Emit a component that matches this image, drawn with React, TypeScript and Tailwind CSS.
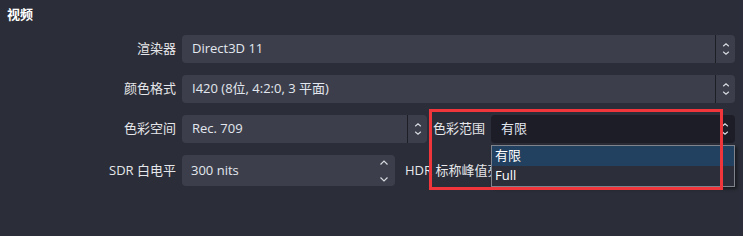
import type { ReactNode } from "react";

const FONT = "font-['Open_Sans','Noto_Sans_CJK_SC',sans-serif]";

function ComboArrows() {
  return (
    <svg width="8" height="12" viewBox="0 0 8 12" fill="none" stroke="#d6d8de" strokeWidth={1.2}>
      <path d="M1.2 3.2 L4 0.8 L6.8 3.2" />
      <path d="M1.2 8.8 L4 11.2 L6.8 8.8" />
    </svg>
  );
}

function SpinArrows() {
  return (
    <svg width="10" height="22" viewBox="0 0 10 22" fill="none" stroke="#d6d8de" strokeWidth={1.2}>
      <path d="M1.5 4.5 L5 1 L8.5 4.5" />
      <path d="M1.5 17.5 L5 21 L8.5 17.5" />
    </svg>
  );
}

function Label({ children, width }: { children: ReactNode; width: string }) {
  return <div className={`${width} shrink-0 text-right text-[13px] text-[#e6e7ea]`}>{children}</div>;
}

function Combo({ value, width, dark }: { value: string; width: string; dark?: boolean }) {
  return (
    <div
      className={`${width} h-[28px] flex shrink-0 rounded-[4px] ${
        dark ? "bg-[#1c1d27]" : "bg-[#3c3f4b]"
      }`}
    >
      <div className="flex-1 flex items-center pl-[10px] text-[13px] text-[#e3e7ef] whitespace-nowrap overflow-hidden">
        {value}
      </div>
      <div
        className={`w-[20px] flex items-center justify-center ${
          dark ? "" : "border-l border-[#1d1e26]"
        }`}
      >
        <ComboArrows />
      </div>
    </div>
  );
}

export default function App() {
  return (
    <div className={`relative w-[743px] h-[236px] overflow-hidden bg-[#2b2d38] ${FONT}`}>
      <div className="h-[35px] pl-[7px] pt-[5px] text-[13px] font-bold leading-[18px] text-white">视频</div>

      <div className="flex flex-col gap-[12px]">
        <div className="flex items-center gap-[6px]">
          <Label width="w-[176px]">渲染器</Label>
          <Combo value="Direct3D 11" width="w-[553px]" />
        </div>

        <div className="flex items-center gap-[6px]">
          <Label width="w-[176px]">颜色格式</Label>
          <Combo value="I420 (8位, 4:2:0, 3 平面)" width="w-[553px]" />
        </div>

        <div className="flex items-center gap-[6px]">
          <Label width="w-[176px]">色彩空间</Label>
          <Combo value="Rec. 709" width="w-[245px]" />
          <div className="w-[52px] shrink-0 whitespace-nowrap text-[13px] text-[#e6e7ea]">色彩范围</div>
          <Combo value="有限" width="w-[244px]" dark />
        </div>

        <div className="flex items-center">
          <Label width="w-[176px]">SDR 白电平</Label>
          <div className="ml-[6px] w-[213px] h-[31px] flex shrink-0 rounded-[4px] bg-[#3c3f4b]">
            <div className="flex-1 flex items-center pl-[9px] text-[13px] text-[#e3e7ef]">300 nits</div>
            <div className="w-[22px] flex items-center justify-center">
              <SpinArrows />
            </div>
          </div>
          {/* label runs on under the open list; clipped where the list covers it */}
          <div className="ml-[10px] w-[86px] overflow-hidden whitespace-nowrap text-[13px] text-[#e6e7ea]">
            HDR 标称峰值亮度
          </div>
        </div>
      </div>

      {/* open dropdown list */}
      <div className="absolute left-[491px] top-[145px] w-[244px] h-[42px] border border-[#80838c] bg-[#2c2e3a] shadow-[2px_2px_3px_rgba(0,0,0,0.45)]">
        <div className="h-[20px] flex items-center pl-[3px] bg-[#22405f] text-[13px] text-white">有限</div>
        <div className="h-[20px] flex items-center pl-[3px] text-[13px] text-white">Full</div>
      </div>

      {/* annotation */}
      <div className="absolute left-[429px] top-[109px] w-[294px] h-[81px] border-[3px] border-[#f0353b] pointer-events-none" />
    </div>
  );
}
